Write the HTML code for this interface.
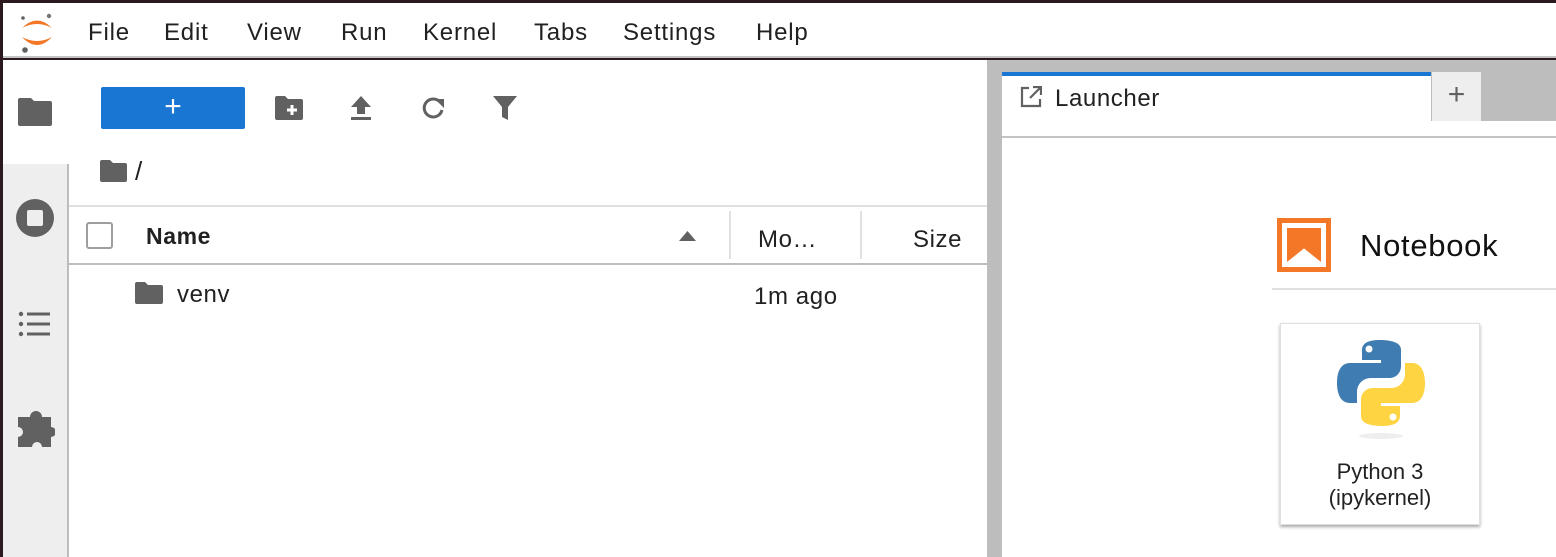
<!DOCTYPE html>
<html><head><style>
*{box-sizing:border-box;margin:0;padding:0}
body{width:1556px;height:557px;overflow:hidden;background:#2c1a1e;font-family:"Liberation Sans",sans-serif;color:#212121;position:relative}
.abs{position:absolute}
.menu{left:3px;top:3px;width:1553px;height:55px;background:#fff;border-bottom:2px solid #c4c4c4}
.menu span{position:absolute;top:16px;font-size:24px;letter-spacing:0.8px;color:#212121}
.t{letter-spacing:0.6px}
</style></head><body>
<div class="abs menu">
  <svg class="abs" style="left:15px;top:8px" width="38" height="42" viewBox="0 0 38 42">
    <circle cx="5" cy="7" r="1.8" fill="#616161"/><circle cx="31" cy="5" r="2.2" fill="#757575"/><circle cx="7" cy="39" r="2.8" fill="#616161"/>
    <path d="M4 17 Q19 2 34 17 Q19 9 4 17Z" fill="#f37726"/>
    <path d="M4 26 Q19 42 34 26 Q19 34 4 26Z" fill="#f37726"/>
  </svg>
  <span style="left:85px">File</span><span style="left:161px">Edit</span><span style="left:244px">View</span><span style="left:338px">Run</span><span style="left:420px">Kernel</span><span style="left:531px">Tabs</span><span style="left:620px">Settings</span><span style="left:753px">Help</span>
</div>
<!-- left sidebar -->
<div class="abs" style="left:3px;top:60px;width:66px;height:497px;background:#eee;border-right:2px solid #bdbdbd"></div>
<div class="abs" style="left:3px;top:60px;width:66px;height:104px;background:#fff"></div>
<svg class="abs" style="left:18px;top:98px" width="34" height="28" viewBox="0 0 34 28"><path d="M2 0h11l3 3h16a2 2 0 0 1 2 2v21a2 2 0 0 1-2 2H2a2 2 0 0 1-2-2V2a2 2 0 0 1 2-2z" fill="#616161"/></svg>
<svg class="abs" style="left:15px;top:198px" width="40" height="40" viewBox="0 0 40 40"><circle cx="20" cy="20" r="19" fill="#616161"/><rect x="12" y="12" width="16" height="16" rx="2" fill="#eee"/></svg>
<svg class="abs" style="left:18px;top:310px" width="34" height="28" viewBox="0 0 34 28"><g fill="#616161"><circle cx="3" cy="4" r="2.2"/><circle cx="3" cy="14" r="2.2"/><circle cx="3" cy="24" r="2.2"/><rect x="9" y="2.5" width="23" height="3"/><rect x="9" y="12.5" width="23" height="3"/><rect x="9" y="22.5" width="23" height="3"/></g></svg>
<svg class="abs" style="left:17px;top:410px" width="38" height="38" viewBox="0 0 38 38"><path d="M1 7h12a6 6 0 0 1 12 0h9v10a5 5 0 0 1 0 10v10H25a5 5 0 0 0-10 0H1V27a5 5 0 0 0 0-10z" fill="#616161"/></svg>
<!-- file browser -->
<div class="abs" style="left:69px;top:60px;width:918px;height:497px;background:#fff"></div>
<div class="abs" style="left:101px;top:87px;width:144px;height:42px;background:#1976d2;border-radius:2px;color:#fff;font-size:30px;text-align:center;line-height:40px">+</div>
<svg class="abs" style="left:275px;top:96px" width="28" height="24" viewBox="0 0 28 24"><path d="M2 0h8l3 3h13a2 2 0 0 1 2 2v17a2 2 0 0 1-2 2H2a2 2 0 0 1-2-2V2a2 2 0 0 1 2-2z" fill="#616161"/><path d="M17 9v10M12 14h10" stroke="#fff" stroke-width="3"/></svg>
<svg class="abs" style="left:350px;top:96px" width="22" height="24" viewBox="0 0 22 24"><path d="M11 0L1 11h6v7h8v-7h6z" fill="#616161"/><rect x="1" y="21" width="20" height="3" fill="#616161"/></svg>
<svg class="abs" style="left:420px;top:95px" width="26" height="26" viewBox="0 0 26 26"><path d="M20 7A9 9 0 1 0 22 15" fill="none" stroke="#616161" stroke-width="3"/><path d="M15 4h9v9z" fill="#616161"/></svg>
<svg class="abs" style="left:493px;top:96px" width="24" height="25" viewBox="0 0 24 25"><path d="M0 0h24L15 11v13l-6-3V11z" fill="#616161"/></svg>
<svg class="abs" style="left:100px;top:160px" width="27" height="22" viewBox="0 0 27 22"><path d="M2 0h8l3 3h12a2 2 0 0 1 2 2v15a2 2 0 0 1-2 2H2a2 2 0 0 1-2-2V2a2 2 0 0 1 2-2z" fill="#616161"/></svg>
<div class="abs" style="left:135px;top:156px;font-size:26px">/</div>
<div class="abs" style="left:69px;top:205px;width:918px;height:2px;background:#e0e0e0"></div>
<div class="abs" style="left:69px;top:263px;width:918px;height:2px;background:#bdbdbd"></div>
<div class="abs" style="left:86px;top:222px;width:27px;height:27px;border:2px solid #9e9e9e;border-radius:3px"></div>
<div class="abs t" style="left:146px;top:223px;font-size:23px;font-weight:bold">Name</div>
<svg class="abs" style="left:679px;top:231px" width="17" height="10"><path d="M0 10L8.5 0L17 10z" fill="#616161"/></svg>
<div class="abs" style="left:729px;top:211px;width:2px;height:48px;background:#e0e0e0"></div>
<div class="abs" style="left:860px;top:211px;width:2px;height:48px;background:#e0e0e0"></div>
<div class="abs t" style="left:758px;top:226px;font-size:24px">Mo…</div>
<div class="abs t" style="left:913px;top:226px;font-size:24px">Size</div>
<svg class="abs" style="left:135px;top:282px" width="28" height="22" viewBox="0 0 28 22"><path d="M2 0h8l3 3h13a2 2 0 0 1 2 2v15a2 2 0 0 1-2 2H2a2 2 0 0 1-2-2V2a2 2 0 0 1 2-2z" fill="#616161"/></svg>
<div class="abs t" style="left:177px;top:281px;font-size:24px">venv</div>
<div class="abs t" style="left:754px;top:283px;font-size:24px">1m ago</div>
<!-- splitter & right -->
<div class="abs" style="left:987px;top:60px;width:15px;height:497px;background:#bdbdbd"></div>
<div class="abs" style="left:1002px;top:60px;width:554px;height:497px;background:#fff"></div>
<div class="abs" style="left:1002px;top:60px;width:554px;height:61px;background:#bdbdbd"></div>
<div class="abs" style="left:1002px;top:136px;width:554px;height:2px;background:#c4c4c4"></div>
<div class="abs" style="left:1002px;top:72px;width:429px;height:64px;background:#fff;border-top:4px solid #1976d2"></div>
<svg class="abs" style="left:1020px;top:86px" width="22" height="22" viewBox="0 0 22 22"><path d="M9 2H2v18h18v-7" fill="none" stroke="#616161" stroke-width="2.2"/><path d="M13 1h8v8M21 1L10 12" fill="none" stroke="#616161" stroke-width="2.2"/></svg>
<div class="abs t" style="left:1055px;top:85px;font-size:24px">Launcher</div>
<div class="abs" style="left:1432px;top:72px;width:49px;height:49px;background:#eee;color:#616161;font-size:30px;text-align:center;line-height:46px">+</div>
<div class="abs" style="left:1277px;top:218px;width:54px;height:54px;border:5px solid #f37726;background:#fff"></div>
<svg class="abs" style="left:1287px;top:228px" width="34" height="34" viewBox="0 0 30 30"><path d="M0 0h30v30L15 18 0 30z" fill="#f37726"/></svg>
<div class="abs" style="left:1360px;top:228px;font-size:31px;letter-spacing:0.7px;color:#111">Notebook</div>
<div class="abs" style="left:1272px;top:288px;width:284px;height:2px;background:#e0e0e0"></div>
<div class="abs" style="left:1280px;top:323px;width:200px;height:202px;background:#fff;border:1px solid #e0e0e0;box-shadow:0 2px 3px rgba(0,0,0,.35)"></div>
<svg class="abs" style="left:1337px;top:339px" width="88" height="100" viewBox="0 0 88 100">
  <ellipse cx="44" cy="97" rx="22" ry="3" fill="#eee"/>
  <path d="M42 1c-10 0-17 3-17 10v10h19v3H13C5 24 0 31 0 44s5 20 13 20h7V53c0-8 6-14 14-14h18c7 0 12-5 12-12V11C64 4 56 1 42 1z" fill="#3f7cb1"/>
  <circle cx="32" cy="10" r="3.5" fill="#fff"/>
  <path d="M46 87c10 0 17-3 17-10V67H44v-3h31c8 0 13-7 13-20s-5-20-13-20h-7v11c0 8-6 14-14 14H36c-7 0-12 5-12 12v16c0 7 8 10 22 10z" fill="#fed443"/>
  <circle cx="56" cy="78" r="3.5" fill="#fff"/>
</svg>
<div class="abs" style="left:1280px;top:459px;width:200px;text-align:center;font-size:22px;line-height:26px;color:#222">Python 3<br>(ipykernel)</div>
</body></html>
